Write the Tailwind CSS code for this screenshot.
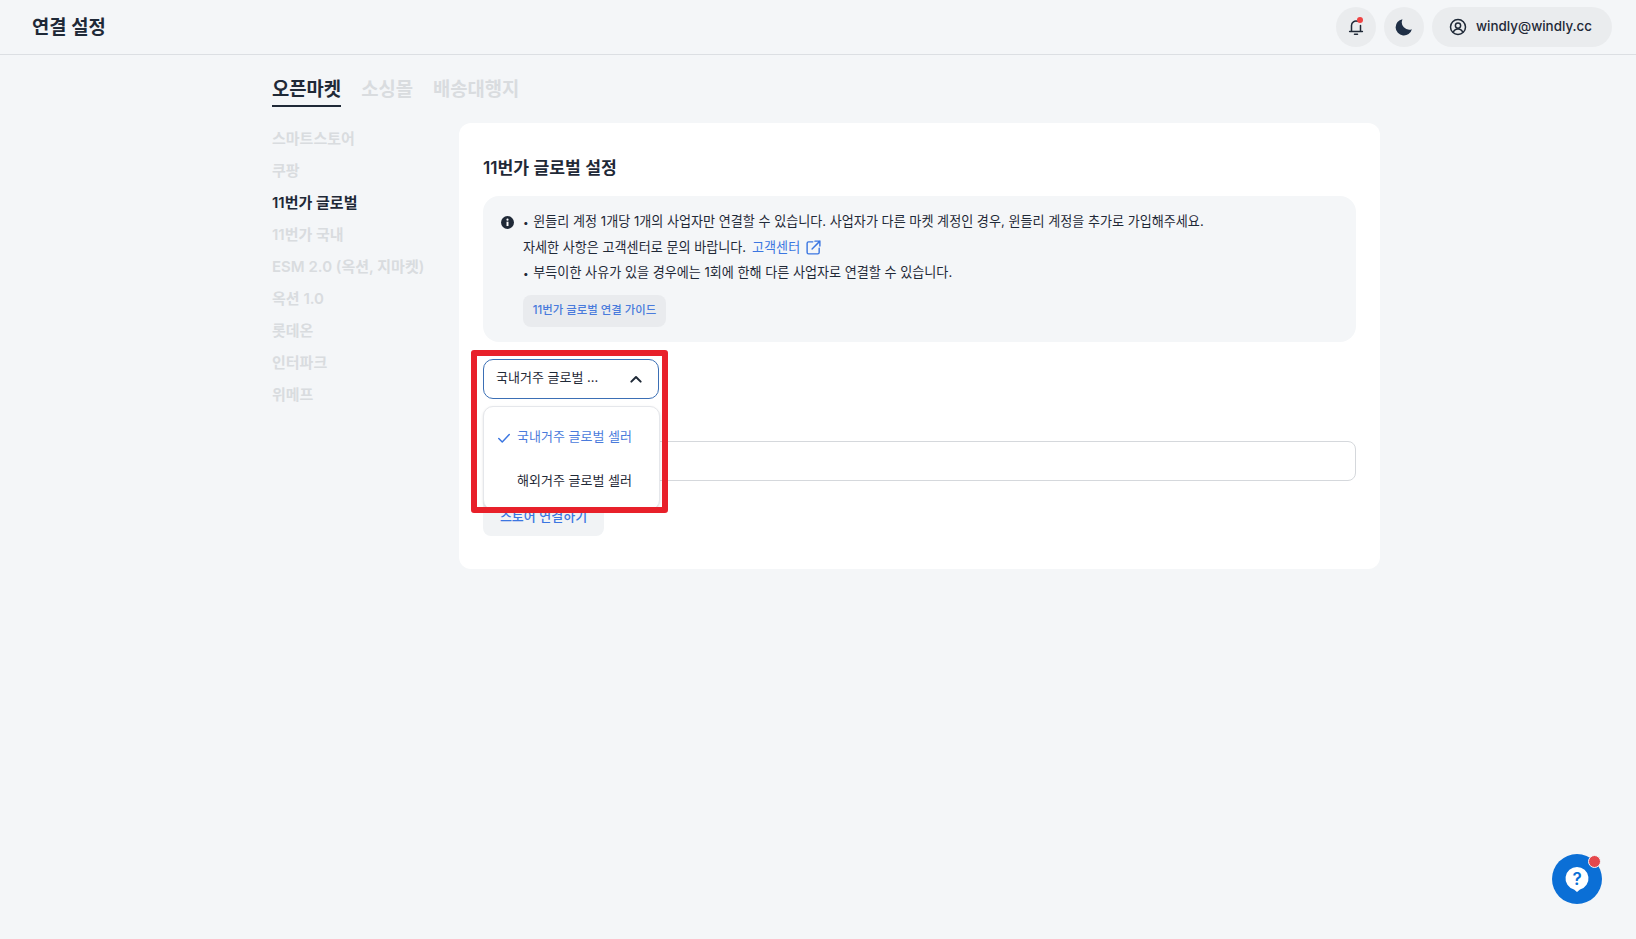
<!DOCTYPE html>
<html lang="ko">

<head>
    <meta charset="UTF-8">
    <meta name="viewport" content="width=device-width, initial-scale=1.0">
    <title>연결 설정</title>
    <script src="https://cdn.jsdelivr.net/npm/@tailwindcss/browser@4"></script>
</head>

<body class="bg-[#f4f6f8] text-[#1f2937] font-['Inter','Noto_Sans_CJK_KR',sans-serif]">
    <div class="relative h-[939px] w-full overflow-hidden">

        <!-- Header -->
        <header class="flex h-[55px] items-center justify-between border-b border-[#dcdfe3] pl-[32px] pr-[24px]">
            <h1 class="pt-[2px] text-[18.800px] font-semibold">연결 설정</h1>
            <div class="flex items-center gap-2">
                <button type="button" class="relative flex h-10 w-10 items-center justify-center rounded-full bg-[#eaecee]">
                    <svg width="18" height="18" viewBox="0 0 24 24" fill="none" stroke="#1f2937" stroke-width="2" stroke-linecap="round" stroke-linejoin="round">
                        <path d="M6 17V10a6 6 0 0 1 8-5.600M18 10v7M3.500 18h17M10 21.500h4" />
                    </svg>
                    <span class="absolute right-[13px] top-[10px] h-[6px] w-[6px] rounded-full bg-[#ef4444]"></span>
                </button>
                <button type="button" class="flex h-10 w-10 items-center justify-center rounded-full bg-[#eaecee]">
                    <svg width="18" height="18" viewBox="0 0 24 24" fill="#1f2f46">
                        <path d="M10 1.500a11 11 0 1 0 12.500 13.500A10 10 0 0 1 10 1.500z" />
                    </svg>
                </button>
                <button type="button" class="flex h-10 w-[180px] items-center gap-[9px] rounded-full bg-[#eaecee] pb-[1px] pl-[17px] text-[13.400px] font-medium">
                    <svg width="18" height="18" viewBox="0 0 24 24" fill="none" stroke="#1f2937" stroke-width="2">
                        <circle cx="12" cy="12" r="10" />
                        <circle cx="12" cy="10" r="3.500" />
                        <path d="M5.500 19c1.200-3 3.600-4.500 6.500-4.500s5.300 1.500 6.500 4.500" />
                    </svg>
                    windly@windly.cc
                </button>
            </div>
        </header>

        <main class="pl-[272px]">
            <!-- Tabs -->
            <nav class="flex h-[52px] items-end gap-5 text-[18.800px] font-semibold text-[#d9dcdf]">
                <a class="border-b-2 border-[#1f2937] pb-[1px] text-[#1f2937]">오픈마켓</a>
                <a class="pb-[3px]">소싱몰</a>
                <a class="pb-[3px]">배송대행지</a>
            </nav>

            <div class="mt-[16px] flex">
                <!-- Sidebar -->
                <ul class="flex w-[187px] flex-col gap-2 text-[15px] font-semibold leading-6 text-[#d9dcdf]">
                    <li class="mt-[4px]">스마트스토어</li>
                    <li>쿠팡</li>
                    <li class="text-[#1f2937]">11번가 글로벌</li>
                    <li>11번가 국내</li>
                    <li>ESM 2.0 (옥션, 지마켓)</li>
                    <li>옥션 1.0</li>
                    <li>롯데온</li>
                    <li>인터파크</li>
                    <li>위메프</li>
                </ul>

                <!-- Card -->
                <section class="relative h-[446px] w-[921px] rounded-xl bg-white px-6 pt-[32px]">
                    <h2 class="text-[17.200px] font-semibold leading-[26px]">11번가 글로벌 설정</h2>

                    <div class="mt-[15px] flex h-[146px] rounded-2xl bg-[#f4f6f8] pl-[18px] pt-[13px]">
                        <svg class="mt-[7px] shrink-0" width="13" height="13" viewBox="0 0 24 24">
                            <circle cx="12" cy="12" r="12" fill="#1f2937" />
                            <rect x="10.200" y="10.500" width="3.600" height="8" fill="#fff" />
                            <circle cx="12" cy="6.800" r="2" fill="#fff" />
                        </svg>
                        <div class="ml-[9px] text-[13.080px] leading-[25.500px]">
                            <p class="h-[25.500px]"><span class="mr-[1px] text-[10px] leading-none">•</span> 윈들리 계정 1개당 1개의 사업자만 연결할 수 있습니다. 사업자가 다른 마켓 계정인 경우, 윈들리 계정을 추가로 가입해주세요.</p>
                            <p class="flex h-[25.500px] items-center">자세한 사항은 고객센터로 문의 바랍니다.
                                <a class="ml-[6px] flex items-center gap-[5px] text-[#3b76e1]">고객센터
                                    <svg class="mt-[1px]" width="17" height="17" viewBox="0 0 24 24" fill="none" stroke="#3b76e1" stroke-width="2" stroke-linecap="round" stroke-linejoin="round">
                                        <path d="M11 4H5a2 2 0 0 0-2 2v13a2 2 0 0 0 2 2h13a2 2 0 0 0 2-2v-6M14 3h7v7M21 3 10 14" />
                                    </svg>
                                </a>
                            </p>
                            <p class="h-[25.500px]"><span class="mr-[1px] text-[10px] leading-none">•</span> 부득이한 사유가 있을 경우에는 1회에 한해 다른 사업자로 연결할 수 있습니다.</p>
                            <a class="mt-[9px] flex h-8 w-[143px] items-center justify-center rounded-lg bg-[#e9ebee] pt-[1px] text-[11.400px] font-medium text-[#4a7bdc]">11번가 글로벌 연결 가이드</a>
                        </div>
                    </div>

                    <!-- Seller type select -->
                    <button type="button" class="mt-[17px] flex h-10 w-[176px] items-center justify-between rounded-[10px] border border-[#3b6fb5] bg-white pb-[2px] pl-3 pr-[14px] text-[13px]">
                        국내거주 글로벌 ...
                        <svg class="mt-[2px]" width="16" height="16" viewBox="0 0 24 24" fill="none" stroke="#1f2937" stroke-width="3" stroke-linecap="round" stroke-linejoin="round">
                            <path d="m5 16 7-7 7 7" />
                        </svg>
                    </button>

                    <div class="mt-[42px] h-10 rounded-lg border border-[#d5d8dc]"></div>

                    <button type="button" class="mt-[15px] h-10 w-[121px] rounded-lg bg-[#f1f3f5] pt-[2px] text-[13px] font-medium text-[#3b76e1]">스토어 연결하기</button>

                    <!-- Dropdown menu -->
                    <div class="absolute left-6 top-[283px] h-[104px] w-[177px] rounded-[10px] border border-[#e5e7eb] bg-white pt-[19px] text-[13px] shadow-sm">
                        <div class="flex h-[22px] items-center pl-[13px] text-[#4a7bdc]">
                            <svg class="mt-[1px]" width="14" height="14" viewBox="0 0 24 24" fill="none" stroke="#3b76e1" stroke-width="2.500" stroke-linecap="round" stroke-linejoin="round">
                                <path d="m3 13 6 6L21 6" />
                            </svg>
                            <span class="ml-[6px]">국내거주 글로벌 셀러</span>
                        </div>
                        <div class="mt-[22px] flex h-[22px] items-center pl-[33px]">해외거주 글로벌 셀러</div>
                    </div>

                    <!-- Red annotation box -->
                    <div class="absolute left-[12px] top-[227px] h-[163px] w-[197px] rounded-[3px] border-[6px] border-[#e8202a]"></div>
                </section>
            </div>
        </main>

        <!-- Help button -->
        <button type="button" class="absolute left-[1552px] top-[854px] flex h-[50px] w-[50px] items-center justify-center rounded-full bg-[#0b6fd6]">
            <svg width="26" height="28" viewBox="0 0 26 28">
                <path d="M13 2a11.500 11.500 0 0 1 3 22.600L13 27l-3-2.400A11.500 11.500 0 0 1 13 2z" fill="#fff" />
                <text x="13" y="19.500" text-anchor="middle" font-family="Inter" font-size="17" font-weight="600" fill="#0b6fd6">?</text>
            </svg>
            <span class="absolute right-[1px] top-[1px] h-[13px] w-[13px] rounded-full border border-[#f4f6f8] bg-[#e5484d]"></span>
        </button>
    </div>
</body>

</html>
